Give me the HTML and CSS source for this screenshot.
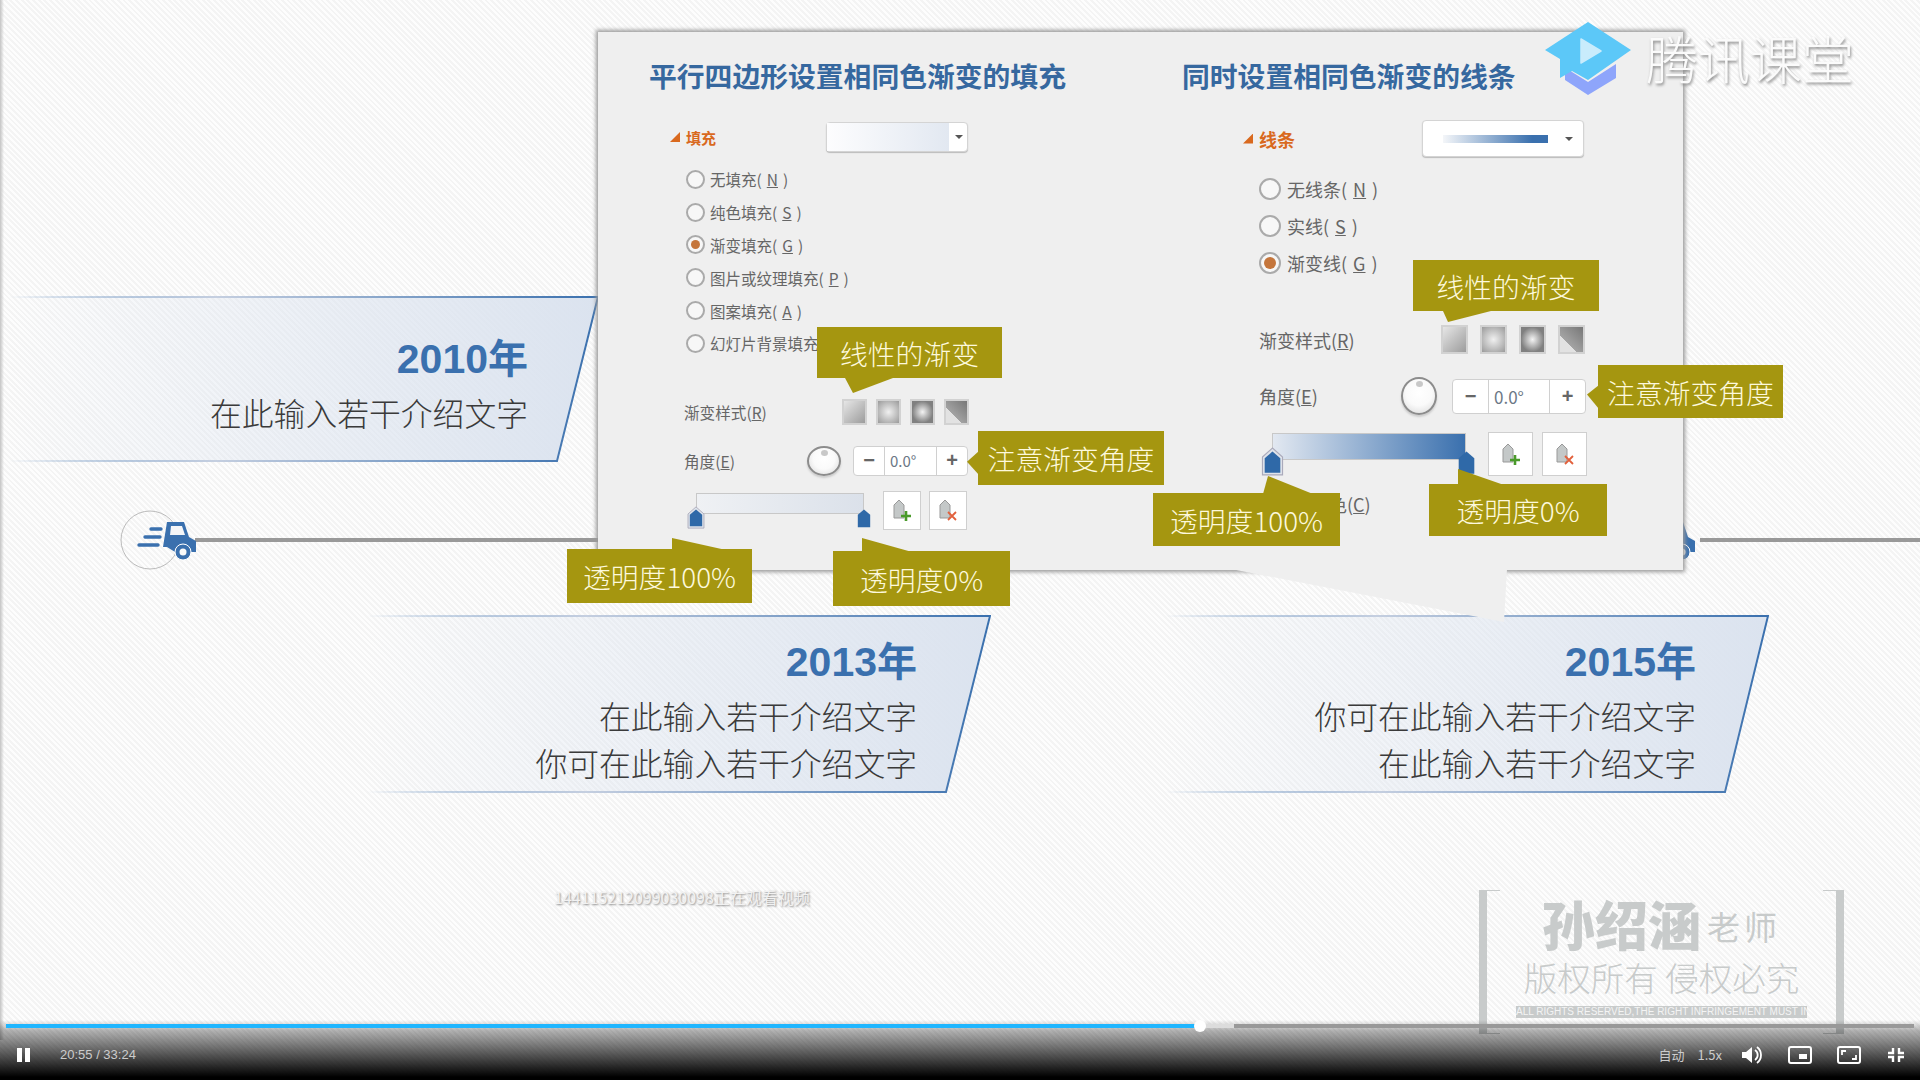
FILE: index.html
```html
<!DOCTYPE html>
<html lang="zh-CN">
<head>
    <meta charset="UTF-8">
    <meta name="viewport" content="width=device-width, initial-scale=1.0">
    <title>腾讯课堂</title>
    <link rel="stylesheet" href="styles.css">
</head>
<body>
    <svg class="defs" width="0" height="0">
        <defs>
            <linearGradient id="cardFill"><stop offset="0" stop-color="#dbe3ef" stop-opacity="0"/><stop offset="1" stop-color="#dbe3ef"/></linearGradient>
            <linearGradient id="cardLine"><stop offset="0" stop-color="#3a70ae" stop-opacity="0"/><stop offset="0.35" stop-color="#c5cfe0"/><stop offset="1" stop-color="#3a70ae"/></linearGradient>
        </defs>
    </svg>

    <div class="video">
        <div class="slide">
            <div class="edge"></div>

            <!-- linea de tiempo -->
            <div class="line line-left"></div>
            <div class="line line-right"></div>
            <svg class="truck truck-left" viewBox="0 0 80 60">
                <circle cx="30" cy="30" r="29" fill="none" stroke="#bbb" stroke-width="1"/>
                <path d="M47 12H64L69 27L76 31V42H71A8 8 0 0 0 55 42L47 37L43 37Z" fill="#3a70ae"/>
                <path d="M51 16H62L65 25H50Z" fill="#f4f5f7"/>
                <circle cx="63" cy="42" r="8" fill="#3a70ae" stroke="#fff" stroke-width="1"/>
                <circle cx="63" cy="42" r="3.5" fill="#fafafa"/>
                <path d="M31 19H41M25 27H40M19 35H38" stroke="#3a70ae" stroke-width="3.4" stroke-linecap="round"/>
            </svg>
            <svg class="truck truck-right" viewBox="0 0 80 60">
                <path d="M47 12H64L69 27L76 31V42H71A8 8 0 0 0 55 42L47 37L43 37Z" fill="#3a70ae"/>
                <circle cx="63" cy="42" r="8" fill="#3a70ae" stroke="#fff" stroke-width="1"/>
                <circle cx="63" cy="42" r="3.5" fill="#fafafa"/>
            </svg>

            <!-- tarjetas -->
            <div class="card card-2010">
                <svg class="card-bg" viewBox="0 0 590 166" preserveAspectRatio="none">
                    <polygon points="0,1 589,1 548,165 0,165" fill="url(#cardFill)"/>
                    <polyline points="0,1 589,1 548,165 0,165" fill="none" stroke="url(#cardLine)" stroke-width="2"/>
                </svg>
                <div class="year">2010<span class="year-cn">年</span></div>
                <p class="card-text">在此输入若干介绍文字</p>
            </div>
            <div class="card card-2013">
                <svg class="card-bg" viewBox="0 0 624 178" preserveAspectRatio="none">
                    <polygon points="0,1 623,1 579,177 0,177" fill="url(#cardFill)"/>
                    <polyline points="0,1 623,1 579,177 0,177" fill="none" stroke="url(#cardLine)" stroke-width="2"/>
                </svg>
                <div class="year">2013<span class="year-cn">年</span></div>
                <p class="card-text">在此输入若干介绍文字</p>
                <p class="card-text">你可在此输入若干介绍文字</p>
            </div>
            <div class="card card-2015">
                <svg class="card-bg" viewBox="0 0 604 178" preserveAspectRatio="none">
                    <polygon points="0,1 603,1 560,177 0,177" fill="url(#cardFill)"/>
                    <polyline points="0,1 603,1 560,177 0,177" fill="none" stroke="url(#cardLine)" stroke-width="2"/>
                </svg>
                <div class="year">2015<span class="year-cn">年</span></div>
                <p class="card-text">你可在此输入若干介绍文字</p>
                <p class="card-text">在此输入若干介绍文字</p>
            </div>

            <!-- panel de opciones -->
            <div class="panel">
                <section class="pane pane-fill">
                    <h2 class="pane-title">平行四边形设置相同色渐变的填充</h2>
                    <div class="pane-head">
                        <div class="head-label"><i class="tri"></i>填充</div>
                        <div class="dropdown"><span class="swatch-fill"></span><i class="caret"></i></div>
                    </div>
                    <ul class="radios">
                        <li class="radio-row"><i class="radio"></i>无填充(<u>N</u>)</li>
                        <li class="radio-row"><i class="radio"></i>纯色填充(<u>S</u>)</li>
                        <li class="radio-row"><i class="radio on"></i>渐变填充(<u>G</u>)</li>
                        <li class="radio-row"><i class="radio"></i>图片或纹理填充(<u>P</u>)</li>
                        <li class="radio-row"><i class="radio"></i>图案填充(<u>A</u>)</li>
                        <li class="radio-row"><i class="radio"></i>幻灯片背景填充(<u>B</u>)</li>
                    </ul>
                    <div class="style-row">
                        <span class="field-label">渐变样式(<u>R</u>)</span>
                        <i class="grad-box g1"></i><i class="grad-box g2"></i><i class="grad-box g3"></i><i class="grad-box g4"></i>
                    </div>
                    <div class="angle-row">
                        <span class="field-label">角度(<u>E</u>)</span>
                        <i class="knob"></i>
                        <div class="spinner"><b class="spin-btn">−</b><span class="spin-val">0.0°</span><b class="spin-btn">+</b></div>
                    </div>
                    <div class="stops-row">
                        <div class="track">
                            <div class="bar"></div>
                            <svg class="stop stop-a" viewBox="0 0 20 26"><path d="M1 9L10 1L19 9V25H1Z" fill="#dfe3ea" stroke="#aab"/><path d="M3 10L10 4L17 10V23H3Z" fill="#2f69a8"/></svg>
                            <svg class="stop stop-b" viewBox="0 0 20 26"><path d="M3 10L10 4L17 10V24H3Z" fill="#2f69a8"/></svg>
                        </div>
                        <div class="stop-btn">
                            <svg viewBox="0 0 26 26"><path d="M5 8L10 3L15 8V21H5Z" fill="#c4c8c8" stroke="#999"/><path d="M17 14V24M12 19H22" stroke="#4a9a2a" stroke-width="2.6"/></svg>
                        </div>
                        <div class="stop-btn">
                            <svg viewBox="0 0 26 26"><path d="M5 8L10 3L15 8V21H5Z" fill="#c4c8c8" stroke="#999"/><path d="M13 15L21 23M21 15L13 23" stroke="#e2603c" stroke-width="1.8"/></svg>
                        </div>
                    </div>
                </section>

                <section class="pane pane-line">
                    <h2 class="pane-title">同时设置相同色渐变的线条</h2>
                    <div class="pane-head">
                        <div class="head-label"><i class="tri"></i>线条</div>
                        <div class="dropdown"><span class="swatch-line"></span><i class="caret"></i></div>
                    </div>
                    <ul class="radios">
                        <li class="radio-row"><i class="radio"></i>无线条(<u>N</u>)</li>
                        <li class="radio-row"><i class="radio"></i>实线(<u>S</u>)</li>
                        <li class="radio-row"><i class="radio on"></i>渐变线(<u>G</u>)</li>
                    </ul>
                    <div class="style-row">
                        <span class="field-label">渐变样式(<u>R</u>)</span>
                        <i class="grad-box g1"></i><i class="grad-box g2"></i><i class="grad-box g3"></i><i class="grad-box g4"></i>
                    </div>
                    <div class="angle-row">
                        <span class="field-label">角度(<u>E</u>)</span>
                        <i class="knob"></i>
                        <div class="spinner"><b class="spin-btn">−</b><span class="spin-val">0.0°</span><b class="spin-btn">+</b></div>
                    </div>
                    <div class="stops-row">
                        <div class="track">
                            <div class="bar"></div>
                            <svg class="stop stop-a" viewBox="0 0 20 26"><path d="M1 9L10 1L19 9V25H1Z" fill="#dfe3ea" stroke="#aab"/><path d="M3 10L10 4L17 10V23H3Z" fill="#2f69a8"/></svg>
                            <svg class="stop stop-b" viewBox="0 0 20 26"><path d="M3 10L10 4L17 10V24H3Z" fill="#2f69a8"/></svg>
                        </div>
                        <div class="stop-btn">
                            <svg viewBox="0 0 26 26"><path d="M5 8L10 3L15 8V21H5Z" fill="#c4c8c8" stroke="#999"/><path d="M17 14V24M12 19H22" stroke="#4a9a2a" stroke-width="2.6"/></svg>
                        </div>
                        <div class="stop-btn">
                            <svg viewBox="0 0 26 26"><path d="M5 8L10 3L15 8V21H5Z" fill="#c4c8c8" stroke="#999"/><path d="M13 15L21 23M21 15L13 23" stroke="#e2603c" stroke-width="1.8"/></svg>
                        </div>
                    </div>
                    <div class="color-row field-label">颜色(<u>C</u>)</div>
                </section>
            </div>

            <!-- notas -->
            <div class="note note-a">线性的渐变</div>
            <div class="note note-b">注意渐变角度</div>
            <div class="note note-c">透明度100%</div>
            <div class="note note-d">透明度0%</div>
            <div class="note note-e">线性的渐变</div>
            <div class="note note-f">注意渐变角度</div>
            <div class="note note-g">透明度100%</div>
            <div class="note note-h">透明度0%</div>

            <!-- marcas de agua -->
            <svg class="logo-mark" viewBox="0 0 86 74">
                <path d="M20 45L27 50L43 60L71 42V56L43 73L20 58Z" fill="#8ea5fb"/>
                <path d="M43 0L86 28L43 58L27 49L15 56V37L0 28Z" fill="#5cc8f8"/>
                <path d="M36 17L56 29L36 41Z" fill="#c9ecfc" stroke="#c9ecfc" stroke-width="1.5" stroke-linejoin="round"/>
            </svg>
            <div class="logo-text">腾讯课堂</div>
            <div class="viewer-id">144115212099030098正在观看视频</div>

            <div class="stamp">
                <div class="stamp-name"><strong>孙绍涵</strong><span>老师</span></div>
                <div class="stamp-slogan">版权所有 侵权必究</div>
                <div class="stamp-tag">ALL RIGHTS RESERVED,THE RIGHT INFRINGEMENT MUST INVESTIGATE!</div>
            </div>
        </div>

        <!-- reproductor -->
        <div class="player">
            <div class="progress">
                <div class="played"></div>
                <div class="buffered"></div>
                <div class="rest"></div>
                <i class="thumb"></i>
            </div>
            <div class="controls">
                <svg class="ic-pause" viewBox="0 0 14 14"><path d="M0 0H5V14H0ZM8 0H13V14H8Z" fill="#fff"/></svg>
                <span class="time">20:55 / 33:24</span>
                <div class="controls-right">
                    <span class="ctl-text">自动</span>
                    <span class="ctl-text">1.5x</span>
                    <svg class="ic-vol" viewBox="0 0 20 18"><path d="M0 6H4L10 1V17L4 12H0Z" fill="#fff"/><path d="M13 4A6 6 0 0 1 13 14M15 1A10 10 0 0 1 15 17" fill="none" stroke="#fff" stroke-width="1.8"/></svg>
                    <svg class="ic-pip" viewBox="0 0 24 18"><rect x="1" y="1" width="22" height="16" rx="2" fill="none" stroke="#fff" stroke-width="2"/><rect x="11" y="8" width="8" height="5" fill="#fff"/></svg>
                    <svg class="ic-page" viewBox="0 0 24 18"><rect x="1" y="1" width="22" height="16" rx="2" fill="none" stroke="#fff" stroke-width="2"/><path d="M5 9V5H9M19 9V13H15" fill="none" stroke="#fff" stroke-width="1.8"/></svg>
                    <svg class="ic-exit" viewBox="0 0 16 14"><path d="M5 0V5H0M11 0V5H16M5 14V9H0M11 14V9H16" fill="none" stroke="#fff" stroke-width="2.4"/></svg>
                </div>
            </div>
        </div>
    </div>
</body>
</html>
```

FILE: styles.css
```css
* {
    box-sizing: border-box;
}
body {
    margin: 0;
    font-family: "Noto Sans CJK SC", "Liberation Sans", sans-serif;
    background-color: #000;
    overflow: hidden;
}
p, h2, ul {
    margin: 0;
    padding: 0;
}
i {
    display: block;
    font-style: normal;
}
.defs {
    position: absolute;
}
.video {
    position: relative;
    width: 1920px;
    height: 1080px;
    overflow: hidden;
}
.slide {
    position: relative;
    width: 100%;
    height: 100%;
    background-color: #fafafa;
    background-image: repeating-linear-gradient(45deg, #fdfdfd 0, #fdfdfd 2px, #f4f4f4 2px, #f4f4f4 4px);
}
.edge {
    position: absolute;
    left: 0;
    top: 0;
    width: 4px;
    height: 1040px;
    background: linear-gradient(to right, #c4c4c4, rgba(220, 220, 220, 0));
}

/* linea de tiempo */
.line {
    position: absolute;
    top: 538px;
    height: 4px;
    background-color: #999;
}
.line-left {
    left: 195px;
    width: 410px;
}
.line-right {
    left: 1700px;
    width: 220px;
}
.truck {
    position: absolute;
    top: 510px;
    width: 80px;
    height: 60px;
    overflow: visible;
}
.truck-left {
    left: 120px;
}
.truck-right {
    left: 1619px;
}

/* tarjetas */
.card {
    position: absolute;
    text-align: right;
    color: #333;
}
.card-bg {
    position: absolute;
    left: 0;
    top: 0;
    width: 100%;
    height: 100%;
}
.card-2010 {
    left: 9px;
    top: 296px;
    width: 590px;
    height: 166px;
    padding: 36px 71px 0 0;
}
.card-2013 {
    left: 367px;
    top: 615px;
    width: 624px;
    height: 178px;
    padding: 20px 74px 0 0;
}
.card-2015 {
    left: 1165px;
    top: 615px;
    width: 604px;
    height: 178px;
    padding: 20px 73px 0 0;
}
.year {
    position: relative;
    height: 48px;
    margin-bottom: 9px;
    font-family: "Liberation Sans Narrow", "Liberation Sans", sans-serif;
    font-size: 41px;
    font-weight: 700;
    line-height: 48px;
    color: #3a70ae;
}
.year-cn {
    font-family: "Noto Sans CJK SC", sans-serif;
    font-size: 40px;
}
.card-text {
    position: relative;
    font-size: 31.8px;
    font-weight: 300;
    line-height: 47px;
    color: #3a3a3a;
}

/* panel */
.panel {
    position: absolute;
    left: 598px;
    top: 32px;
    width: 1085px;
    height: 538px;
    display: grid;
    grid-template-columns: 584px 501px;
    background-color: #efefef;
    box-shadow: 0 0 4px 2px #9a9a9a;
}
.panel::after {
    content: "";
    position: absolute;
    left: 633px;
    top: 537px;
    width: 276px;
    height: 53px;
    background-color: #efefef;
    clip-path: polygon(0 0, 100% 0, 273px 100%);
}
.pane {
    padding-top: 29px;
}
.pane-fill {
    padding-left: 51px;
}
.pane-title {
    font-family: "Noto Sans CJK SC", sans-serif;
    font-size: 27.8px;
    font-weight: 700;
    line-height: 28px;
    white-space: nowrap;
    color: #36689f;
}
.pane-head {
    display: flex;
    align-items: center;
    color: #d9691e;
    font-weight: 700;
}
.pane-fill .pane-head {
    margin: 33px 0 0 21px;
    font-size: 15px;
}
.pane-line .pane-head {
    margin: 31px 0 0 61px;
    font-size: 18px;
}
.head-label {
    display: flex;
    align-items: center;
    gap: 6px;
}
.pane-fill .head-label {
    width: 156px;
}
.pane-line .head-label {
    width: 179px;
}
.tri {
    width: 10px;
    height: 10px;
    background-color: #d9691e;
    clip-path: polygon(100% 0, 100% 100%, 0 100%);
}
.dropdown {
    display: flex;
    align-items: center;
    background-color: #fff;
    border: 1px solid #d4d4d4;
    border-radius: 4px;
    box-shadow: 0 1px 1px #bbb;
}
.pane-fill .dropdown {
    width: 142px;
    height: 30px;
}
.pane-line .dropdown {
    width: 162px;
    height: 37px;
    padding-left: 20px;
}
.swatch-fill {
    width: 122px;
    height: 100%;
    background: linear-gradient(to right, #fdfdfe, #e2e8f1);
}
.swatch-line {
    width: 105px;
    height: 8px;
    background: linear-gradient(to right, #f4f6f9, #3a70ae 85%);
}
.caret {
    margin-left: 6px;
    border: 4px solid transparent;
    border-top-color: #555;
    border-bottom: 0;
}
.pane-line .caret {
    margin-left: 17px;
}
.radios {
    list-style-type: none;
}
.radio-row {
    display: flex;
    align-items: center;
    color: #666;
    white-space: nowrap;
}
.pane-fill .radios {
    margin: 11px 0 0 37px;
    font-size: 15.5px;
}
.pane-fill .radio-row {
    height: 32.8px;
    gap: 5px;
}
.pane-line .radios {
    margin: 13px 0 0 77px;
    font-size: 18px;
}
.pane-line .radio-row {
    height: 37px;
    gap: 6px;
}
.radio {
    position: relative;
    flex: none;
    border: 2px solid #aaa;
    border-radius: 50%;
    background-color: #f7f7f7;
}
.pane-fill .radio {
    width: 19px;
    height: 19px;
}
.pane-line .radio {
    width: 22px;
    height: 22px;
}
.radio.on::after {
    content: "";
    position: absolute;
    inset: 3px;
    border-radius: 50%;
    background-color: #c5763c;
}
.field-label {
    flex: none;
    color: #666;
    white-space: nowrap;
}
.style-row, .angle-row, .stops-row {
    display: flex;
    align-items: center;
}
.pane-fill .style-row, .pane-fill .angle-row, .pane-fill .stops-row {
    margin-left: 35px;
    font-size: 15.6px;
}
.pane-line .style-row, .pane-line .angle-row, .pane-line .stops-row {
    margin-left: 77px;
    font-size: 18px;
}
.pane-fill .style-row {
    margin-top: 39px;
    gap: 9px;
}
.pane-line .style-row {
    margin-top: 44px;
    gap: 12px;
}
.pane-fill .style-row .field-label {
    width: 149px;
}
.pane-line .style-row .field-label {
    width: 170px;
}
.grad-box {
    border: 2px solid #d2d2d2;
}
.pane-fill .grad-box {
    width: 25px;
    height: 26px;
}
.pane-line .grad-box {
    width: 27px;
    height: 29px;
}
.g1 {
    background: linear-gradient(135deg, #e6e6e6, #9c9c9c);
}
.g2 {
    background: radial-gradient(circle, #f0f0f0, #9a9a9a);
}
.g3 {
    background: radial-gradient(closest-side, #f4f4f4, #808080);
}
.g4 {
    background: linear-gradient(45deg, #e2e2e2 35%, transparent 35%), linear-gradient(225deg, #777, #bbb);
}
.pane-fill .angle-row {
    margin-top: 21px;
}
.pane-line .angle-row {
    margin-top: 23px;
}
.pane-fill .angle-row .field-label {
    width: 123px;
}
.pane-line .angle-row .field-label {
    width: 142px;
}
.knob {
    position: relative;
    flex: none;
    border: 2px solid #8c8c8c;
    border-radius: 50%;
    background: radial-gradient(circle at 50% 40%, #fff, #fafafa 50%, #d8d8d8);
    box-shadow: 0 2px 2px #ccc;
}
.pane-fill .knob {
    width: 34px;
    height: 30px;
    margin-right: 12px;
}
.pane-line .knob {
    width: 36px;
    height: 38px;
    margin-right: 15px;
}
.knob::after {
    content: "";
    position: absolute;
    left: 50%;
    top: 2px;
    width: 7px;
    height: 6px;
    margin-left: -3px;
    border-radius: 50%;
    background-color: #c8c8c8;
}
.spinner {
    display: flex;
    align-items: center;
    background-color: #fff;
    border: 1px solid #d0d0d0;
    border-radius: 4px;
    color: #6c7886;
}
.pane-fill .spinner {
    width: 115px;
    height: 30px;
    font-size: 15px;
}
.pane-line .spinner {
    width: 134px;
    height: 35px;
    font-size: 17px;
}
.spin-btn {
    flex: none;
    height: 100%;
    display: flex;
    align-items: center;
    justify-content: center;
    color: #666;
    font-family: "Liberation Sans", sans-serif;
    font-size: 20px;
}
.pane-fill .spin-btn {
    width: 30px;
}
.pane-line .spin-btn {
    width: 35px;
}
.spin-val {
    flex: 1;
    height: 100%;
    padding-left: 5px;
    display: flex;
    align-items: center;
    border-left: 1px solid #d0d0d0;
    border-right: 1px solid #d0d0d0;
}
.stops-row {
    align-items: flex-start;
}
.pane-fill .stops-row {
    margin-top: 15px;
    gap: 8px;
}
.pane-line .stops-row {
    margin-top: 17px;
    gap: 9px;
}
.track {
    position: relative;
    flex: none;
}
.pane-fill .track {
    width: 187px;
    height: 39px;
    margin-right: 4px;
}
.pane-line .track {
    width: 220px;
    height: 44px;
}
.bar {
    position: absolute;
    border: 1px solid #c8c8c8;
}
.pane-fill .bar {
    left: 12px;
    top: 2px;
    width: 168px;
    height: 21px;
    background: linear-gradient(to right, #eff1f4, #dbe1ea);
}
.pane-line .bar {
    left: 13px;
    top: 1px;
    width: 194px;
    height: 27px;
    background: linear-gradient(to right, #e2e8f1, #3a70ae);
}
.stop {
    position: absolute;
}
.pane-fill .stop {
    top: 15px;
    width: 18px;
    height: 23px;
}
.pane-fill .stop-a {
    left: 3px;
}
.pane-fill .stop-b {
    left: 171px;
}
.pane-line .stop {
    top: 15px;
    width: 23px;
    height: 29px;
}
.pane-line .stop-a {
    left: 2px;
}
.pane-line .stop-b {
    left: 196px;
}
.stop-btn {
    flex: none;
    background-color: #fff;
    border: 1px solid #cfcfcf;
    display: flex;
    align-items: center;
    justify-content: center;
}
.pane-fill .stop-btn {
    width: 38px;
    height: 39px;
}
.pane-line .stop-btn {
    width: 45px;
    height: 44px;
}
.stop-btn svg {
    width: 26px;
    height: 26px;
}
.color-row {
    margin: 16px 0 0 129px;
    font-size: 18px;
    line-height: 24px;
}

/* notas */
.note {
    position: absolute;
    display: flex;
    align-items: center;
    justify-content: center;
    background-color: #a59610;
    color: #fdf9dc;
    font-size: 27.8px;
    font-weight: 300;
    white-space: nowrap;
}
.note::after {
    content: "";
    position: absolute;
    background-color: #a59610;
}
.note-a {
    left: 817px;
    top: 327px;
    width: 185px;
    height: 51px;
}
.note-a::after {
    left: 28px;
    top: 51px;
    width: 48px;
    height: 15px;
    clip-path: polygon(0 0, 100% 0, 8px 100%);
}
.note-b {
    left: 978px;
    top: 431px;
    width: 186px;
    height: 54px;
}
.note-b::after {
    left: -11px;
    top: 20px;
    width: 12px;
    height: 24px;
    clip-path: polygon(100% 0, 100% 100%, 0 45%);
}
.note-c {
    left: 567px;
    top: 549px;
    width: 185px;
    height: 54px;
}
.note-c::after {
    left: 105px;
    top: -11px;
    width: 54px;
    height: 12px;
    clip-path: polygon(0 0, 100% 100%, 0 100%);
}
.note-d {
    left: 833px;
    top: 551px;
    width: 177px;
    height: 55px;
}
.note-d::after {
    left: 29px;
    top: -13px;
    width: 50px;
    height: 14px;
    clip-path: polygon(0 0, 100% 100%, 0 100%);
}
.note-e {
    left: 1413px;
    top: 260px;
    width: 186px;
    height: 51px;
}
.note-e::after {
    left: 30px;
    top: 51px;
    width: 48px;
    height: 11px;
    clip-path: polygon(0 0, 100% 0, 5px 100%);
}
.note-f {
    left: 1598px;
    top: 365px;
    width: 185px;
    height: 53px;
}
.note-f::after {
    left: -11px;
    top: 20px;
    width: 12px;
    height: 24px;
    clip-path: polygon(100% 0, 100% 100%, 0 40%);
}
.note-g {
    left: 1153px;
    top: 493px;
    width: 187px;
    height: 53px;
}
.note-g::after {
    left: 110px;
    top: -17px;
    width: 50px;
    height: 18px;
    clip-path: polygon(5px 0, 100% 100%, 0 100%);
}
.note-h {
    left: 1429px;
    top: 484px;
    width: 178px;
    height: 52px;
}
.note-h::after {
    left: 29px;
    top: -15px;
    width: 46px;
    height: 16px;
    clip-path: polygon(0 0, 100% 100%, 0 100%);
}

/* marcas de agua */
.logo-mark {
    position: absolute;
    left: 1545px;
    top: 22px;
    width: 86px;
    height: 74px;
}
.logo-text {
    position: absolute;
    left: 1646px;
    top: 20px;
    font-size: 52px;
    font-weight: 300;
    line-height: 76px;
    color: #fbfbfb;
    white-space: nowrap;
    text-shadow: 1px 2px 3px #8a8a8a;
}
.viewer-id {
    position: absolute;
    left: 554px;
    top: 885px;
    font-size: 16px;
    line-height: 24px;
    color: #f2f2f2;
    white-space: nowrap;
    text-shadow: 1px 1px 2px #8a8a8a;
}
.stamp {
    position: absolute;
    left: 1479px;
    top: 890px;
    width: 365px;
    height: 144px;
    display: flex;
    flex-direction: column;
    align-items: center;
    color: #c8cbcb;
}
.stamp::before, .stamp::after {
    content: "";
    position: absolute;
    top: 0;
    bottom: 0;
    width: 21px;
    background-image: linear-gradient(#c8cbcb, #c8cbcb), linear-gradient(#c8cbcb, #c8cbcb), linear-gradient(#c8cbcb, #c8cbcb);
    background-repeat: no-repeat;
    background-size: 8px 100%, 100% 1px, 100% 1px;
}
.stamp::before {
    left: 0;
    background-position: left top, left top, left bottom;
}
.stamp::after {
    right: 0;
    background-position: right top, right top, right bottom;
}
.stamp-name {
    display: flex;
    align-items: flex-end;
    gap: 6px;
    height: 66px;
    line-height: 66px;
    padding-top: 8px;
}
.stamp-name strong {
    font-size: 53px;
    font-weight: 900;
}
.stamp-name span {
    font-size: 33px;
    letter-spacing: 4px;
    line-height: 60px;
}
.stamp-slogan {
    font-size: 33.5px;
    font-weight: 300;
    line-height: 42px;
    white-space: nowrap;
}
.stamp-tag {
    width: 291px;
    height: 12px;
    margin-top: 8px;
    background-color: #c8cbcb;
    color: #f4f4f4;
    font-family: "Liberation Sans", sans-serif;
    font-size: 10px;
    line-height: 12px;
    text-align: center;
    white-space: nowrap;
    overflow: hidden;
}

/* reproductor */
.player {
    position: absolute;
    left: 0;
    right: 0;
    bottom: 0;
    height: 60px;
    padding-top: 4px;
    background: linear-gradient(to bottom, rgba(0, 0, 0, 0), rgba(0, 0, 0, 0.3) 18%, #000 95%);
}
.progress {
    position: relative;
    display: flex;
    height: 4px;
    margin: 0 6px;
}
.played {
    width: 1189px;
    background-color: #1fb6ff;
}
.buffered {
    width: 39px;
    background-color: #dcdcdc;
}
.rest {
    flex: 1;
    background-color: #999;
}
.thumb {
    position: absolute;
    left: 1188px;
    top: -4px;
    width: 12px;
    height: 12px;
    border-radius: 50%;
    background-color: #fff;
}
.controls {
    display: flex;
    align-items: center;
    height: 53px;
    padding: 0 16px 0 17px;
    color: #ccc;
}
.ic-pause {
    width: 14px;
    height: 14px;
}
.time {
    margin-left: 29px;
    font-family: "Liberation Sans", sans-serif;
    font-size: 13px;
}
.controls-right {
    display: flex;
    align-items: center;
    margin-left: auto;
}
.ctl-text {
    margin-right: 13px;
    font-size: 13px;
}
.ic-vol {
    width: 20px;
    height: 18px;
    margin: 0 26px 0 7px;
}
.ic-pip {
    width: 24px;
    height: 18px;
    margin-right: 25px;
}
.ic-page {
    width: 24px;
    height: 18px;
    margin-right: 27px;
}
.ic-exit {
    width: 16px;
    height: 14px;
}
```
